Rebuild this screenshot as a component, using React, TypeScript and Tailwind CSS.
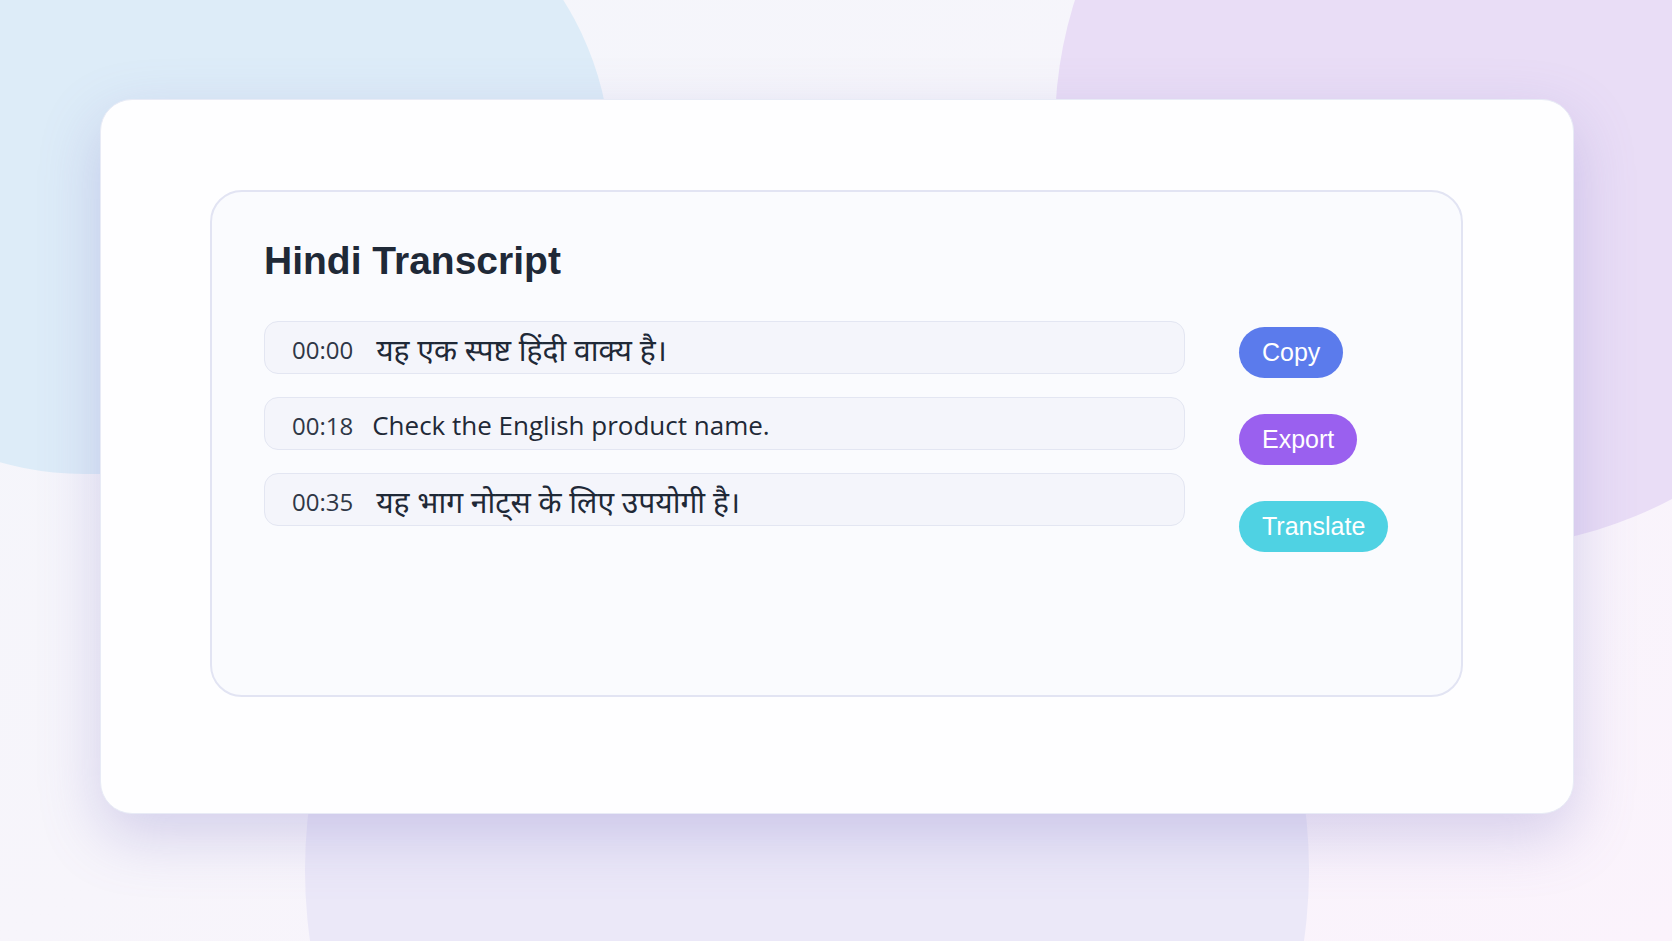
import React from "react";

type Line = { time: string; text: string; hindi?: boolean };

const lines: Line[] = [
  { time: "00:00", text: "यह एक स्पष्ट हिंदी वाक्य है।", hindi: true },
  { time: "00:18", text: "Check the English product name." },
  { time: "00:35", text: "यह भाग नोट्स के लिए उपयोगी है।", hindi: true },
];

const actions = [
  { label: "Copy", className: "bg-[#5b7bec]" },
  { label: "Export", className: "bg-[#9a60ef]" },
  { label: "Translate", className: "bg-[#4fd2e3]" },
];

const TranscriptRow = ({ item }: { item: Line }) => (
  <div className="h-[53px] flex items-center gap-[19px] pl-[27px] pt-[4px] rounded-[14px] bg-[#f4f5fb] border border-[#e3e6f2] font-['Open_Sans','Noto_Sans','Noto_Sans_Devanagari',sans-serif]">
    <span className="text-[24px] text-[#2f3746]">{item.time}</span>
    {item.hindi ? (
      <span className="text-[30px] leading-[40px] text-[#1f2937] ml-[4px]">{item.text}</span>
    ) : (
      <span className="text-[26px] text-[#1f2937]">{item.text}</span>
    )}
  </div>
);

const App: React.FC = () => {
  return (
    <div className="relative w-full h-[941px] overflow-hidden bg-gradient-to-br from-[#f4f6fb] via-[#f7f5fb] to-[#fbf3fc]">
      {/* BACKGROUND BLOBS */}
      <div className="absolute left-[-225px] top-[-144px] w-[836px] h-[618px] rounded-full bg-[#ddecf8]" />
      <div className="absolute left-[1055px] top-[-292px] w-[840px] h-[840px] rounded-full bg-[#e9ddf6]" />
      <div className="absolute left-[305px] top-[368px] w-[1004px] h-[1004px] rounded-full bg-[#ebe8f8]" />

      {/* CARD */}
      <div className="relative pt-[99px] pl-[100px]">
        <div className="w-[1474px] h-[715px] rounded-[32px] bg-[#fefeff] border border-[#e8ebf6] shadow-[0_22px_60px_rgba(130,120,200,0.3)] pt-[90px] pl-[109px]">
          <div className="w-[1253px] h-[507px] rounded-[32px] bg-[#fafbfe] border-2 border-[#e2e4f3] pt-[50px] pl-[52px]">
            <h1 className="font-['Liberation_Sans',Arial,sans-serif] font-bold text-[39px] leading-[38px] text-[#1f2937]">
              Hindi Transcript
            </h1>
            <div className="flex gap-[54px] mt-[41px]">
              <div className="w-[921px] flex flex-col gap-[23px]">
                {lines.map((item) => (
                  <TranscriptRow key={item.time} item={item} />
                ))}
              </div>
              <div className="flex flex-col items-start gap-[36px] pt-[6px]">
                {actions.map((a) => (
                  <button
                    key={a.label}
                    className={`h-[51px] px-[23px] rounded-full text-white text-[25px] font-['Liberation_Sans',Arial,sans-serif] ${a.className}`}
                  >
                    {a.label}
                  </button>
                ))}
              </div>
            </div>
          </div>
        </div>
      </div>
    </div>
  );
};

export default App;
